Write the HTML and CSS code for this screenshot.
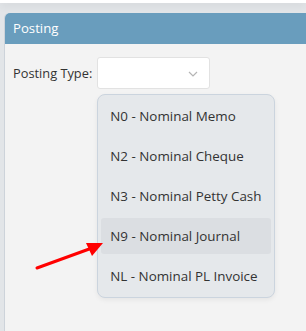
FILE: index.html
```html
<!DOCTYPE html>
<html lang="en">
<head>
    <meta charset="UTF-8">
    <meta name="viewport" content="width=device-width, initial-scale=1.0">
    <title>Posting</title>
    <link rel="stylesheet" href="styles.css">
</head>
<body>
    <div class="top-card"></div>
    <div class="panel">
        <div class="panel-header">Posting</div>
        <div class="panel-body">
            <div class="input-group">
                <label for="postingType">Posting Type:</label>
                <div class="select-wrap">
                    <div class="select" id="postingType">
                        <svg class="chevron" width="10" height="6" viewBox="0 0 10 6">
                            <path d="M1 1 L5 5 L9 1" fill="none" stroke="#b5b5b5" stroke-width="1.2"/>
                        </svg>
                    </div>
                    <ul class="dropdown">
                        <li>N0 - Nominal Memo</li>
                        <li>N2 - Nominal Cheque</li>
                        <li>N3 - Nominal Petty Cash</li>
                        <li class="hover">N9 - Nominal Journal</li>
                        <li>NL - Nominal PL Invoice</li>
                    </ul>
                </div>
            </div>
        </div>
    </div>
    <svg class="arrow" width="80" height="40" viewBox="0 0 80 40">
        <line x1="3" y1="34" x2="58" y2="14" stroke="#f00" stroke-width="3" stroke-linecap="round"/>
        <path d="M69 9 L52 9 L58 22 Z" fill="#f00"/>
    </svg>
</body>
</html>
```

FILE: styles.css
```css
body {
    margin: 0;
    background-color: #e2e5e8;
    font-family: "Open Sans", Arial, sans-serif;
    color: #333;
    overflow: hidden;
    height: 331px;
    position: relative;
}

.top-card {
    height: 3px;
    background-color: #fff;
    box-shadow: 0 2px 8px rgba(0, 0, 0, 0.12);
}

.panel {
    margin: 10px 0 0 4px;
    border-left: 1px solid #cdd3da;
    border-top-left-radius: 5px;
    background-color: #f3f3f3;
    height: 330px;
}

.panel-header {
    background-color: #699dbd;
    color: #fff;
    font-size: 13.2px;
    height: 31px;
    line-height: 31px;
    padding-left: 8px;
    border-top-left-radius: 5px;
}

.panel-body {
    padding: 13px 8px;
}

.input-group {
    display: flex;
    align-items: flex-start;
}

label {
    font-size: 12.8px;
    line-height: 32px;
    margin-right: 5px;
}

.select-wrap {
    position: relative;
}

.select {
    width: 111px;
    height: 30px;
    background-color: #fff;
    border: 1px solid #e2e2e2;
    border-radius: 3px;
    position: relative;
}

.chevron {
    position: absolute;
    right: 11px;
    top: 13px;
}

.dropdown {
    position: absolute;
    top: 37px;
    left: 0;
    width: 170px;
    margin: 0;
    padding: 3px;
    list-style: none;
    background-color: #e5e8eb;
    border: 1px solid #cbd4de;
    border-radius: 8px;
    box-shadow: 0 2px 5px rgba(0, 0, 0, 0.06);
}

.dropdown li {
    height: 36px;
    line-height: 36px;
    padding-left: 9px;
    margin-bottom: 4px;
    font-size: 13.4px;
    border-radius: 3px;
}

.dropdown li:last-child {
    margin-bottom: 0;
}

.dropdown li.hover {
    background-color: #dbdee2;
}

.arrow {
    position: absolute;
    left: 34px;
    top: 234px;
}
```
